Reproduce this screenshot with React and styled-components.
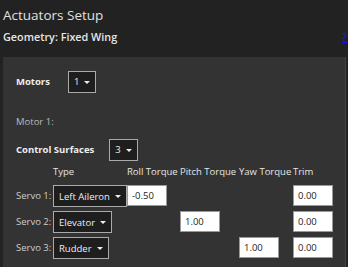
import React from 'react';
import styled, { createGlobalStyle } from 'styled-components';

const Global = createGlobalStyle`
  html, body { margin: 0; padding: 0; background: #222222; }
  body { font-family: "Open Sans", "Liberation Sans", sans-serif; color: #dddddd; }
`;

const Page = styled.div`
  width: 348px;
  height: 267px;
  overflow: hidden;
  background: #222222;
  padding: 0 2px 0 3px;
  box-sizing: border-box;
`;

const Title = styled.h1`
  margin: 0;
  padding-top: 5px;
  font-size: 13.5px;
  font-weight: 400;
  line-height: 20px;
  color: #e0e0e0;
`;

const GeoRow = styled.div`
  display: flex;
  justify-content: space-between;
  align-items: center;
  margin-top: 5px;
  font-size: 10.8px;
  font-weight: 600;
  line-height: 14px;
  color: #e6e6e6;
`;

const Help = styled.a`
  color: #1a1aee;
  text-decoration: underline;
  font-size: 11px;
  font-weight: 400;
  margin-right: -1px;
`;

const Panel = styled.div`
  margin-top: 13px;
  background: #333333;
  border-right: 1px solid #444444;
  padding: 14px 0 20px 13px;
  min-height: 220px;
`;

const Field = styled.div`
  display: flex;
  align-items: center;
  gap: ${p => p.gap || 0}px;
  margin-top: ${p => p.top || 0}px;
  line-height: 14px;
`;

const Label = styled.span`
  font-size: 9.5px;
  font-weight: ${p => (p.bold ? 700 : 400)};
  color: ${p => (p.muted ? '#bbbbbb' : '#eeeeee')};
`;

const Select = styled.div`
  display: inline-flex;
  align-items: center;
  gap: 5px;
  height: 22px;
  padding: 0 3px 0 5px;
  box-sizing: border-box;
  background: #1e1e1e;
  border: 1px solid #aaaaaa;
  font-size: 9.5px;
  color: #eeeeee;
  white-space: nowrap;
`;

const Caret = styled.span`
  width: 0;
  height: 0;
  margin-right: 2px;
  border-left: 3px solid transparent;
  border-right: 3px solid transparent;
  border-top: 3px solid #eeeeee;
`;

const Table = styled.div``;

const TRow = styled.div`
  display: grid;
  grid-template-columns: 37px 74px 53px 59px 54px auto;
  height: ${p => (p.head ? 21 : 26)}px;
  align-items: center;
`;

const Cell = styled.div`
  grid-column: ${p => p.col};
  white-space: nowrap;
`;

const Head = styled(Cell)`
  font-size: 9.5px;
  color: #e6e6e6;
`;

const RowLabel = styled(Cell)`
  font-size: 9.5px;
  color: #cccccc;
`;

const Input = styled.div`
  width: 40px;
  height: 21px;
  box-sizing: border-box;
  background: #ffffff;
  border: 1px solid #999999;
  font-size: 9.5px;
  color: #222222;
  display: flex;
  align-items: center;
  padding-left: 4px;
`;

const heads = ['Type', 'Roll Torque', 'Pitch Torque', 'Yaw Torque', 'Trim'];

const servos = [
  { name: 'Servo 1:', type: 'Left Aileron', col: 3, val: '-0.50' },
  { name: 'Servo 2:', type: 'Elevator', col: 4, val: '1.00' },
  { name: 'Servo 3:', type: 'Rudder', col: 5, val: '1.00' },
];

export default function App() {
  return (
    <Page>
      <Global />
      <Title>Actuators Setup</Title>
      <GeoRow>
        <span>Geometry: Fixed Wing</span>
        <Help href="#">?</Help>
      </GeoRow>
      <Panel>
        <Field gap={18}>
          <Label bold>Motors</Label>
          <Select>1<Caret /></Select>
        </Field>
        <Field top={22}>
          <Label muted>Motor 1:</Label>
        </Field>
        <Field gap={15} top={10}>
          <Label bold>Control Surfaces</Label>
          <Select>3<Caret /></Select>
        </Field>
        <Table>
          <TRow head>
            {heads.map((h, i) => (
              <Head key={h} col={i + 2}>{h}</Head>
            ))}
          </TRow>
          {servos.map(s => (
            <TRow key={s.name}>
              <RowLabel col={1}>{s.name}</RowLabel>
              <Cell col={2}><Select>{s.type}<Caret /></Select></Cell>
              <Cell col={s.col}><Input>{s.val}</Input></Cell>
              <Cell col={6}><Input>0.00</Input></Cell>
            </TRow>
          ))}
        </Table>
      </Panel>
    </Page>
  );
}
